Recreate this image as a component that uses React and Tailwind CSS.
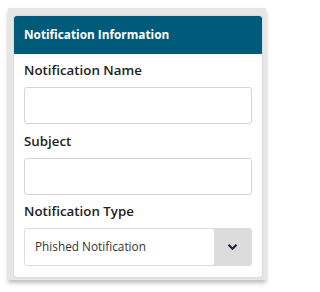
import React from "react";

// ---- Field label ----
const Label = ({ children }) => (
  <p className="text-[13.3px] leading-[19px] font-semibold text-[#222] mb-[7px]">{children}</p>
);

// ---- Text input ----
const TextBox = () => (
  <div className="h-[37px] w-full rounded-[3px] border-[1.5px] border-[#d4d4d4] bg-white" />
);

// ---- Select ----
const SelectBox = ({ value }) => (
  <div className="h-[38px] w-full flex rounded-[3px] border-[1.5px] border-[#dcdcdc] bg-[#dcdcdc]">
    <div className="flex-1 bg-white rounded-[2px] flex items-center pl-[10px] text-[11.8px] text-[#333]">
      {value}
    </div>
    <div className="w-[37px] flex items-center justify-center">
      <svg width="11" height="8" viewBox="0 0 11 8">
        <polyline points="1.5,1.8 5.5,5.8 9.5,1.8" fill="none" stroke="#1d2b3a" strokeWidth="2.2" />
      </svg>
    </div>
  </div>
);

export default function App() {
  return (
    <div className="w-[273px] h-[292px] bg-white pt-2 pl-2" style={{ fontFamily: "'Open Sans', sans-serif" }}>
      <div className="w-[258px] bg-[#e6e6e6] pl-[6px] pr-[4px] pt-[8px] pb-[3px] shadow-[0_3px_4px_rgba(0,0,0,0.25)]">
        <div className="bg-white rounded-[3px] overflow-hidden shadow-[0_0_2px_rgba(0,0,0,0.15)]">
          <div className="h-[38px] bg-[#005a79] flex items-center px-[10px]">
            <h3 className="text-[11.8px] font-bold text-white">Notification Information</h3>
          </div>
          <div className="px-[10px] pt-[7px] pb-[11px]">
            <Label>Notification Name</Label>
            <TextBox />
            <div className="mt-[8px]">
              <Label>Subject</Label>
              <TextBox />
            </div>
            <div className="mt-[7px]">
              <Label>Notification Type</Label>
              <SelectBox value="Phished Notification" />
            </div>
          </div>
        </div>
      </div>
    </div>
  );
}
